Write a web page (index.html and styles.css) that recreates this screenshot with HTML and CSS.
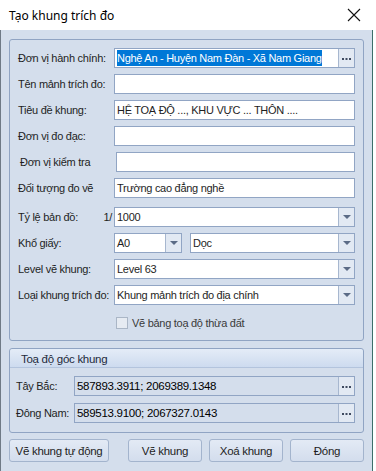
FILE: index.html
```html
<!DOCTYPE html>
<html lang="vi">
<head>
  <meta charset="UTF-8">
  <title>Tạo khung trích đo</title>
  <link rel="stylesheet" href="styles.css">
</head>
<body>
  <div class="window">
    <div class="titlebar">
      <span class="title">Tạo khung trích đo</span>
      <svg class="close" width="14" height="14" viewBox="0 0 14 14"><path d="M1 1L13 13M13 1L1 13" stroke="#111" stroke-width="1.1"/></svg>
    </div>

    <div class="body">
      <!-- Thông tin khung -->
      <div class="group main">
        <div class="row">
          <span class="label">Đơn vị hành chính:</span>
          <div class="field">
            <span class="text"><span class="selected">Nghệ An - Huyện Nam Đàn - Xã Nam Giang</span></span>
            <span class="btn-more"><svg width="9" height="2" viewBox="0 0 9 2"><rect x="0" y="0" width="2" height="2"/><rect x="3.5" y="0" width="2" height="2"/><rect x="7" y="0" width="2" height="2"/></svg></span>
          </div>
        </div>
        <div class="row">
          <span class="label">Tên mảnh trích đo:</span>
          <div class="field"><span class="text"></span></div>
        </div>
        <div class="row">
          <span class="label">Tiêu đề khung:</span>
          <div class="field"><span class="text">HỆ TOẠ ĐỘ ..., KHU VỰC ... THÔN ....</span></div>
        </div>
        <div class="row">
          <span class="label">Đơn vị đo đạc:</span>
          <div class="field"><span class="text"></span></div>
        </div>
        <div class="row shifted">
          <span class="label">Đơn vị kiểm tra</span>
          <div class="field"><span class="text"></span></div>
        </div>
        <div class="row">
          <span class="label">Đối tượng đo vẽ</span>
          <div class="field"><span class="text">Trường cao đẳng nghề</span></div>
        </div>
        <div class="row spaced">
          <span class="label">Tỷ lệ bản đồ:<span class="ratio">1/</span></span>
          <div class="field"><span class="text">1000</span><span class="btn-drop"></span></div>
        </div>
        <div class="row">
          <span class="label">Khổ giấy:</span>
          <div class="field small"><span class="text">A0</span><span class="btn-drop"></span></div>
          <div class="field"><span class="text">Dọc</span><span class="btn-drop"></span></div>
        </div>
        <div class="row">
          <span class="label">Level vẽ khung:</span>
          <div class="field"><span class="text">Level 63</span><span class="btn-drop"></span></div>
        </div>
        <div class="row">
          <span class="label">Loại khung trích đo:</span>
          <div class="field"><span class="text">Khung mảnh trích đo địa chính</span><span class="btn-drop"></span></div>
        </div>
        <div class="check-row">
          <span class="checkbox"></span>
          <span>Vẽ bảng toạ độ thừa đất</span>
        </div>
      </div>

      <!-- Toạ độ góc khung -->
      <div class="group coords">
        <div class="group-head">Toạ độ góc khung</div>
        <div class="coord-rows">
          <div class="row">
            <span class="label short">Tây Bắc:</span>
            <div class="field readonly"><span class="text">587893.3911; 2069389.1348</span><span class="btn-more"><svg width="9" height="2" viewBox="0 0 9 2"><rect x="0" y="0" width="2" height="2"/><rect x="3.5" y="0" width="2" height="2"/><rect x="7" y="0" width="2" height="2"/></svg></span></div>
          </div>
          <div class="row">
            <span class="label short">Đông Nam:</span>
            <div class="field readonly"><span class="text">589513.9100; 2067327.0143</span><span class="btn-more"><svg width="9" height="2" viewBox="0 0 9 2"><rect x="0" y="0" width="2" height="2"/><rect x="3.5" y="0" width="2" height="2"/><rect x="7" y="0" width="2" height="2"/></svg></span></div>
          </div>
        </div>
      </div>

      <div class="buttons">
        <button class="wide">Vẽ khung tự động</button>
        <button>Vẽ khung</button>
        <button>Xoá khung</button>
        <button>Đóng</button>
      </div>
    </div>
  </div>
</body>
</html>
```

FILE: styles.css
```css
* {
  box-sizing: border-box;
}

body {
  margin: 0;
  width: 376px;
  height: 471px;
  overflow: hidden;
  background: #fff;
  font-family: "Liberation Sans", Arial, sans-serif;
  font-size: 11px;
  letter-spacing: -0.28px;
  color: #1e1e1e;
}

.window {
  width: 376px;
  height: 471px;
  display: flex;
  flex-direction: column;
}

.titlebar {
  height: 30px;
  flex: none;
  display: flex;
  align-items: center;
  justify-content: space-between;
  padding: 0 15px 0 9px;
  background: #fff;
}

.title {
  font-family: "Noto Sans", sans-serif;
  font-size: 12px;
  letter-spacing: 0;
  color: #000;
}

.body {
  flex: 1;
  width: 373px;
  background: #d4deec;
  border-left: 1px solid #6f7a86;
  border-right: 1px solid #3d6f6a;
  padding: 9px 8px 0 8px;
}

.group {
  border: 1px solid #90a4c3;
  border-radius: 3px;
}

.main {
  height: 302px;
  padding: 8px 8px 0 8px;
  display: flex;
  flex-direction: column;
  gap: 6px;
}

.row {
  display: flex;
  align-items: center;
  height: 20px;
}

.row.shifted {
  padding-left: 2px;
}

.row.spaced {
  margin-top: 3px;
}

.label {
  width: 96px;
  flex: none;
  display: flex;
  justify-content: space-between;
  white-space: nowrap;
}

.ratio {
  padding-right: 2px;
}

.field {
  flex: 1;
  height: 20px;
  display: flex;
  background: #fff;
  border: 1px solid #91a5c4;
}

.field.small {
  flex: none;
  width: 68px;
  margin-right: 8px;
}

.field .text {
  flex: 1;
  padding-left: 2px;
  line-height: 18px;
  white-space: nowrap;
  overflow: hidden;
}

.selected {
  background: #0078d7;
  color: #fff;
  padding: 2px 0;
}

.btn-more,
.btn-drop {
  width: 16px;
  flex: none;
  border-left: 1px solid #a7b7cf;
  background: #e2e9f3;
  display: flex;
  align-items: center;
  justify-content: center;
}

.btn-more svg {
  fill: #3e4a60;
  margin-top: 2px;
}

.btn-drop::after {
  content: "";
  border-left: 4px solid transparent;
  border-right: 4px solid transparent;
  border-top: 4px solid #5b6b86;
}

.check-row {
  display: flex;
  align-items: center;
  gap: 4px;
  margin-top: 6px;
  padding-left: 98px;
  color: #3a3a3a;
}

.checkbox {
  width: 12px;
  height: 12px;
  border: 1px solid #aab6c6;
  background: #e6ebf2;
}

.coords {
  margin-top: 7px;
  height: 85px;
}

.group-head {
  height: 19px;
  padding-left: 11px;
  line-height: 20px;
  font-size: 11.5px;
  color: #1e2a3c;
  background: linear-gradient(#e4ecf7, #cddbef);
  border-bottom: 1px solid #b3c4dd;
  border-radius: 3px 3px 0 0;
}

.coord-rows {
  padding: 8px 8px 0 6px;
  display: flex;
  flex-direction: column;
  gap: 7px;
}

.label.short {
  width: 58px;
}

.field.readonly {
  background: #d4deec;
}

.field.readonly .text {
  color: #000;
  font-size: 11.5px;
}

.buttons {
  display: flex;
  gap: 7px;
  margin-top: 6px;
}

.buttons button {
  width: 74px;
  height: 23px;
  padding: 0;
  white-space: nowrap;
  font-family: inherit;
  font-size: 11.5px;
  letter-spacing: -0.28px;
  color: #1e1e1e;
  border: 1px solid #a3b4cd;
  border-radius: 3px;
  background: linear-gradient(#e3eaf5, #d3dded);
}

.buttons button.wide {
  width: 100px;
  margin-right: 12px;
}
```
